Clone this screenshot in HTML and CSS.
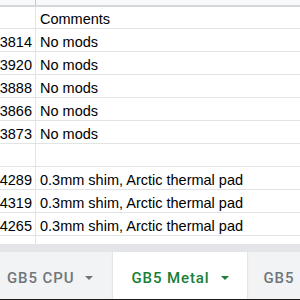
FILE: index.html
```html
<!DOCTYPE html>
<html lang="en">

<head>
    <meta charset="UTF-8">
    <title>GB5 Metal</title>
    <link rel="stylesheet" href="styles.css">
</head>

<body>
    <div class="sheet">
        <div class="col-head">
            <div class="head-cell"></div>
            <div class="head-cell"></div>
        </div>
        <div class="row first">
            <div class="cell num"></div>
            <div class="cell">Comments</div>
        </div>
        <div class="row">
            <div class="cell num">3814</div>
            <div class="cell">No mods</div>
        </div>
        <div class="row">
            <div class="cell num">3920</div>
            <div class="cell">No mods</div>
        </div>
        <div class="row">
            <div class="cell num">3888</div>
            <div class="cell">No mods</div>
        </div>
        <div class="row">
            <div class="cell num">3866</div>
            <div class="cell">No mods</div>
        </div>
        <div class="row">
            <div class="cell num">3873</div>
            <div class="cell">No mods</div>
        </div>
        <div class="row">
            <div class="cell num"></div>
            <div class="cell"></div>
        </div>
        <div class="row">
            <div class="cell num">4289</div>
            <div class="cell">0.3mm shim, Arctic thermal pad</div>
        </div>
        <div class="row">
            <div class="cell num">4319</div>
            <div class="cell">0.3mm shim, Arctic thermal pad</div>
        </div>
        <div class="row">
            <div class="cell num">4265</div>
            <div class="cell">0.3mm shim, Arctic thermal pad</div>
        </div>
        <div class="row">
            <div class="cell num"></div>
            <div class="cell"></div>
        </div>
    </div>

    <div class="scroll-track"></div>

    <div class="tabs">
        <div class="tab">GB5 CPU <span class="caret"></span></div>
        <div class="tab active">GB5 Metal <span class="caret"></span></div>
        <div class="tab">GB5</div>
    </div>
    <div class="edge"></div>
</body>

</html>
```

FILE: styles.css
```css
* {
    margin: 0;
    padding: 0;
    box-sizing: border-box;
}
html,
body {
    height: 100%;
}
body {
    overflow: hidden;
    display: flex;
    flex-direction: column;
    background: #fff;
    font-family: "Liberation Sans", Arial, sans-serif;
    font-size: 14.5px;
    color: #000;
}
.sheet {
    height: 244px;
    overflow: hidden;
    flex: none;
}
.col-head {
    display: grid;
    grid-template-columns: 36px 1fr;
    height: 7px;
    background: #f8f9fa;
    border-bottom: 2px solid #d5d6d7;
}
.head-cell:first-child {
    border-right: 1px solid #c4c7c9;
}
.row {
    display: grid;
    grid-template-columns: 36px 1fr;
    height: 23px;
    border-bottom: 1px solid #e2e3e3;
}
.row.first {
    height: 22px;
}
.cell {
    display: flex;
    align-items: flex-end;
    padding: 0 3px 1px 4px;
    line-height: 16px;
    white-space: nowrap;
}
.cell.num {
    justify-content: flex-end;
    border-right: 1px solid #e2e3e3;
    padding-right: 3px;
}
.scroll-track {
    height: 8px;
    flex: none;
    background: #e3e5e8;
}
.tabs {
    flex: 1;
    display: flex;
    background: #f1f3f4;
    font-family: Roboto, "Liberation Sans", sans-serif;
    font-weight: 500;
    font-size: 15px;
    letter-spacing: 0.9px;
    color: #70757a;
    overflow: hidden;
}
.tab {
    display: flex;
    align-items: center;
    gap: 11px;
    padding: 5px 20px 0 7px;
    white-space: nowrap;
    flex: none;
}
.tab.active {
    background: #fff;
    color: #188038;
    padding-left: 18px;
    width: 134px;
    box-shadow: 0 0 2px rgba(60, 64, 67, 0.25);
}
.tab.active + .tab {
    padding-left: 16px;
}
.caret {
    width: 0;
    height: 0;
    border-left: 4px solid transparent;
    border-right: 4px solid transparent;
    border-top: 4px solid currentColor;
}
.edge {
    height: 1px;
    flex: none;
    background: #1b1b1b;
}
```
